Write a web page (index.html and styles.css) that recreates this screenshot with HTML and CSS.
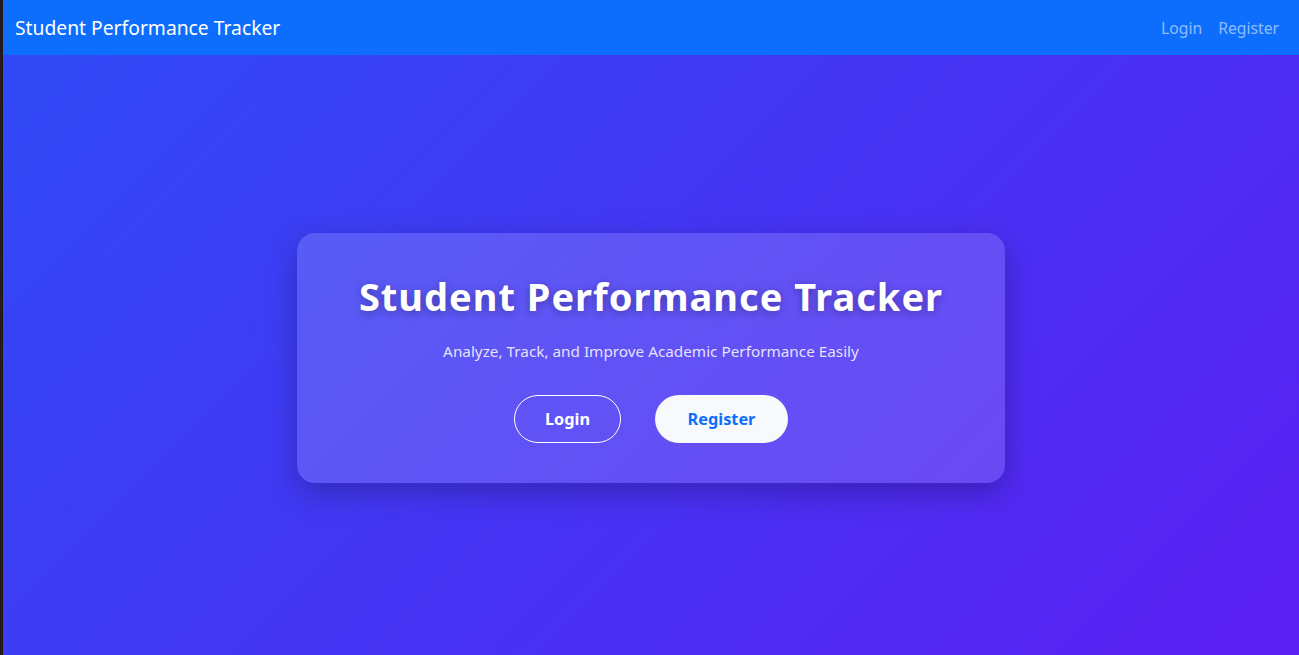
FILE: index.html
```html
<!DOCTYPE html>
<html lang="en">
<head>
<meta charset="utf-8">
<title>Student Performance Tracker</title>
<link rel="stylesheet" href="styles.css">
</head>
<body>
<div class="page">
  <nav class="navbar">
    <a class="brand" href="#">Student Performance Tracker</a>
    <div class="nav-links">
      <a class="nav-link" href="#">Login</a>
      <a class="nav-link" href="#">Register</a>
    </div>
  </nav>
  <main class="hero">
    <div class="card">
      <h1 class="title">Student Performance Tracker</h1>
      <p class="subtitle">Analyze, Track, and Improve Academic Performance Easily</p>
      <div class="actions">
        <a class="btn btn-outline" href="#">Login</a>
        <a class="btn btn-light" href="#">Register</a>
      </div>
    </div>
  </main>
</div>
</body>
</html>
```
FILE: styles.css
```css
html {
  background: #231a1c;
}
body {
  margin: 0 0 0 3px;
  font-family: "Noto Sans", "Open Sans", sans-serif;
  height: 655px;
  overflow: hidden;
}
.page {
  display: flex;
  flex-direction: column;
  height: 100%;
  background: linear-gradient(135deg, #2f4bf6 0%, #5b1ff2 100%);
}
.navbar {
  height: 55px;
  flex: none;
  background: #0d6efd;
  display: flex;
  align-items: center;
  justify-content: space-between;
  padding: 0 12px;
}
.brand {
  color: #fff;
  text-decoration: none;
  font-size: 19.3px;
}
.nav-links {
  display: flex;
}
.nav-link {
  color: rgba(255, 255, 255, 0.55);
  text-decoration: none;
  font-size: 15.7px;
  padding: 8px;
}
.hero {
  flex: 1;
  display: flex;
  align-items: center;
  justify-content: center;
}
.card {
  width: 708px;
  height: 250px;
  box-sizing: border-box;
  margin-top: 5px;
  border-radius: 18px;
  background: rgba(255, 255, 255, 0.15);
  box-shadow: 0 10px 30px rgba(0, 0, 0, 0.25);
  display: flex;
  flex-direction: column;
  align-items: center;
  padding-top: 41px;
}
.title {
  margin: 0;
  color: #fff;
  font-size: 38px;
  font-weight: 700;
  letter-spacing: 1px;
  line-height: 1.2;
  text-shadow: 0 2px 8px rgba(0, 0, 0, 0.3);
}
.subtitle {
  margin: 22px 0 0;
  color: rgba(255, 255, 255, 0.85);
  font-size: 15.3px;
}
.actions {
  display: flex;
  gap: 34px;
  margin-top: 34px;
}
.btn {
  display: flex;
  align-items: center;
  justify-content: center;
  height: 48px;
  box-sizing: border-box;
  border-radius: 24px;
  font-size: 16.3px;
  font-weight: 700;
  text-decoration: none;
}
.btn-outline {
  width: 107px;
  border: 1px solid #fff;
  color: #fff;
}
.btn-light {
  width: 133px;
  background: #f8f9fa;
  color: #0d6efd;
}
```
